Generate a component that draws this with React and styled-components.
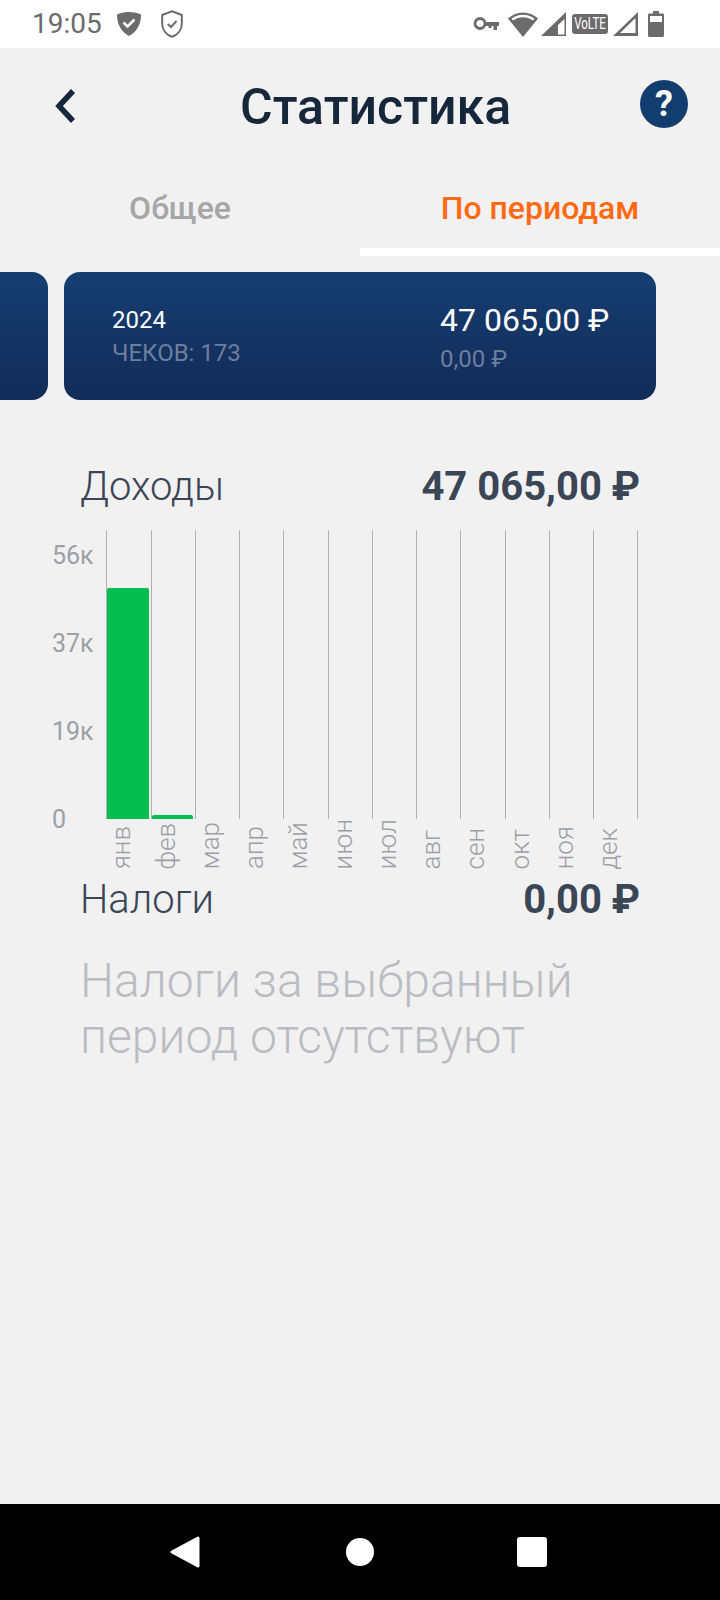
import React from "react";
import styled, { createGlobalStyle } from "styled-components";

const months = [
  { name: "янв", bar: 231 },
  { name: "фев", bar: 4 },
  { name: "мар", bar: 0 },
  { name: "апр", bar: 0 },
  { name: "май", bar: 0 },
  { name: "июн", bar: 0 },
  { name: "июл", bar: 0 },
  { name: "авг", bar: 0 },
  { name: "сен", bar: 0 },
  { name: "окт", bar: 0 },
  { name: "ноя", bar: 0 },
  { name: "дек", bar: 0 },
];

const ticks = ["56к", "37к", "19к", "0"];

const App = () => {
  return (
    <Page>
      <GlobalStyle />
      <StatusBar>
        <Time>19:05</Time>
        <svg width="26" height="24" viewBox="0 0 26 24">
          <path d="M13 0C8 0 4 1 1 2.500C1 11 4 19 13 24C22 19 25 11 25 2.500C22 1 18 0 13 0Z" fill="#6b6b6b" />
          <path d="M7.500 10.500L11.500 14.500L18.500 7.500" fill="none" stroke="#fff" strokeWidth="2.500" />
        </svg>
        <ShieldOutline width="22" height="28" viewBox="0 0 22 28">
          <path d="M11 1.200L20.800 5V14C20.800 20 16.500 24.800 11 26.800C5.500 24.800 1.200 20 1.200 14V5Z" fill="none" stroke="#6b6b6b" strokeWidth="2" />
          <path d="M6.800 14L10 17L15.500 11" fill="none" stroke="#6b6b6b" strokeWidth="2" />
        </ShieldOutline>
        <StatusRight>
          <svg width="26" height="16" viewBox="0 0 26 16">
            <circle cx="7" cy="7.500" r="5" fill="none" stroke="#6b6b6b" strokeWidth="2.800" />
            <path d="M12 6H26V10H24V14H20.500V10H18.500V12H15.500V10H12Z" fill="#6b6b6b" />
          </svg>
          <WifiIcon width="30" height="25" viewBox="0 0 30 25">
            <path d="M0 6.500C8.500 -1.500 21.500 -1.500 30 6.500L15 25Z" fill="#6b6b6b" />
            <path d="M3.500 6.700C10 1.500 20 1.500 26.500 6.700L25 8.500C19 4 11 4 5 8.500Z" fill="#fff" />
          </WifiIcon>
          <SignalIcon width="25" height="24" viewBox="0 0 25 24">
            <path d="M25 0V24H0Z" fill="#6b6b6b" />
            <path d="M23.500 7L17 13V22.500H23.500Z" fill="#fff" />
          </SignalIcon>
          <VolteBadge>
            <VolteText>VoLTE</VolteText>
          </VolteBadge>
          <SignalIcon width="25" height="24" viewBox="0 0 25 24">
            <path d="M25 0V24H0Z" fill="#6b6b6b" />
            <path d="M22.500 6L7 21H22.500Z" fill="#fff" />
          </SignalIcon>
          <BatteryIcon width="16" height="26" viewBox="0 0 16 26">
            <path d="M5 0H11V2.500H14.500C15.300 2.500 16 3.200 16 4V24.500C16 25.300 15.300 26 14.500 26H1.500C0.700 26 0 25.300 0 24.500V4C0 3.200 0.700 2.500 1.500 2.500H5Z" fill="#6b6b6b" />
            <rect x="2" y="5" width="12" height="6" fill="#fff" />
          </BatteryIcon>
        </StatusRight>
      </StatusBar>

      <Header>
        <BackButton width="22" height="36" viewBox="0 0 22 36">
          <path d="M19 3L5 18L19 33" fill="none" stroke="#17273b" strokeWidth="5.500" />
        </BackButton>
        <Title>Статистика</Title>
        <HelpButton>?</HelpButton>
      </Header>

      <Tabs>
        <Tab>Общее</Tab>
        <Tab $active>По периодам</Tab>
      </Tabs>

      <Carousel>
        <PeriodCard />
        <PeriodCard>
          <div>
            <Year>2024</Year>
            <Receipts>ЧЕКОВ: 173</Receipts>
          </div>
          <CardAmounts>
            <Income>47 065,00 ₽</Income>
            <Tax>0,00 ₽</Tax>
          </CardAmounts>
        </PeriodCard>
      </Carousel>

      <SummaryRow $top={62}>
        <SummaryLabel>Доходы</SummaryLabel>
        <SummaryValue>47 065,00 ₽</SummaryValue>
      </SummaryRow>

      <Chart>
        <YAxis>
          {ticks.map((tick) => (
            <Tick key={tick}>{tick}</Tick>
          ))}
        </YAxis>
        <div>
          <Plot>
            {months.map((month) => (
              <Column key={month.name}>
                {month.bar > 0 && <Bar $height={month.bar} />}
              </Column>
            ))}
          </Plot>
          <MonthRow>
            {months.map((month) => (
              <Month key={month.name}>{month.name}</Month>
            ))}
          </MonthRow>
        </div>
      </Chart>

      <SummaryRow $top={0}>
        <SummaryLabel>Налоги</SummaryLabel>
        <SummaryValue>0,00 ₽</SummaryValue>
      </SummaryRow>
      <EmptyText>Налоги за выбранный период отсутствуют</EmptyText>

      <NavBar>
        <svg width="30" height="32" viewBox="0 0 30 32">
          <path d="M28 2L2 16L28 30Z" fill="#fff" stroke="#fff" strokeWidth="3" strokeLinejoin="round" />
        </svg>
        <HomeDot />
        <RecentSquare />
      </NavBar>
    </Page>
  );
};

export default App;

const GlobalStyle = createGlobalStyle`
  html, body {
    margin: 0;
    padding: 0;
    background: #f1f1f1;
  }
  body {
    font-family: Roboto, "Noto Sans", sans-serif;
  }
`;

const Page = styled.main`
  position: relative;
  width: 720px;
  height: 1600px;
  overflow: hidden;
  background: #f1f1f1;
`;

const StatusBar = styled.div`
  display: flex;
  align-items: center;
  height: 48px;
  padding: 0 56px 0 32px;
  background: #fff;
`;

const Time = styled.span`
  margin-right: 14px;
  color: #6b6b6b;
  font-size: 28px;
  line-height: 1;
`;

const ShieldOutline = styled.svg`
  margin-left: 19px;
`;

const StatusRight = styled.div`
  display: flex;
  align-items: center;
  margin-left: auto;
`;

const WifiIcon = styled.svg`
  margin-left: 9px;
`;

const SignalIcon = styled.svg`
  margin-left: 3px;
`;

const VolteBadge = styled.div`
  display: flex;
  align-items: center;
  justify-content: center;
  width: 36px;
  height: 20px;
  margin: 0 2px 0 6px;
  border-radius: 3px;
  background: #6b6b6b;
`;

const VolteText = styled.span`
  color: #fff;
  font-size: 16px;
  line-height: 1;
  transform: scaleX(0.72);
`;

const BatteryIcon = styled.svg`
  margin-left: 10px;
`;

const Header = styled.header`
  display: flex;
  align-items: center;
  height: 112px;
  padding: 0 32px 0 54px;
`;

const BackButton = styled.svg`
  flex-shrink: 0;
  margin-top: 3px;
`;

const Title = styled.h1`
  margin: 6px 0 0 164px;
  color: #17273b;
  font-size: 50px;
  font-weight: 500;
  line-height: 1;
`;

const HelpButton = styled.div`
  display: flex;
  align-items: center;
  justify-content: center;
  width: 48px;
  height: 48px;
  margin-left: auto;
  border-radius: 50%;
  background: #143d6f;
  color: #fff;
  font-size: 36px;
  font-weight: 700;
`;

const Tabs = styled.nav`
  display: flex;
  height: 96px;
`;

const Tab = styled.div`
  display: flex;
  flex: 1;
  align-items: center;
  justify-content: center;
  padding-top: 8px;
  box-sizing: border-box;
  border-bottom: 8px solid ${(props) => (props.$active ? "#fff" : "transparent")};
  color: ${(props) => (props.$active ? "#ff6a13" : "#a6a6a6")};
  font-size: 32px;
  font-weight: 500;
`;

const Carousel = styled.div`
  display: flex;
  gap: 16px;
  margin: 16px 0 0 -544px;
`;

const PeriodCard = styled.div`
  display: flex;
  flex: 0 0 592px;
  align-items: center;
  justify-content: space-between;
  box-sizing: border-box;
  height: 128px;
  padding: 0 48px;
  border-radius: 16px;
  background: linear-gradient(#163e71, #122b58);
`;

const Year = styled.div`
  color: #fff;
  font-size: 24px;
  line-height: 34px;
`;

const Receipts = styled.div`
  color: #6d7f9c;
  font-size: 24px;
  line-height: 32px;
`;

const CardAmounts = styled.div`
  width: 168px;
  padding-top: 8px;
  white-space: nowrap;
`;

const Income = styled.div`
  color: #fff;
  font-size: 32px;
  line-height: 38px;
`;

const Tax = styled.div`
  color: #6d7f9c;
  font-size: 24px;
  line-height: 40px;
`;

const SummaryRow = styled.div`
  display: flex;
  align-items: center;
  justify-content: space-between;
  height: 48px;
  margin-top: ${(props) => props.$top}px;
  padding: 0 80px;
`;

const SummaryLabel = styled.span`
  color: #3a4656;
  font-size: 40px;
  font-weight: 300;
`;

const SummaryValue = styled.span`
  color: #3a4656;
  font-size: 40px;
  font-weight: 700;
`;

const Chart = styled.section`
  display: flex;
  margin-top: 20px;
`;

const YAxis = styled.div`
  display: flex;
  flex: 0 0 106.4px;
  flex-direction: column;
  gap: 88px;
  box-sizing: border-box;
  padding: 26px 0 0 52px;
`;

const Tick = styled.div`
  height: 0;
  color: #9aa0a8;
  font-size: 25px;
  line-height: 0;
`;

const Plot = styled.div`
  display: grid;
  grid-template-columns: repeat(12, 44.25px);
  width: 532px;
  height: 289px;
  border-right: 1px solid #aeb1b5;
  box-sizing: border-box;
`;

const Column = styled.div`
  display: flex;
  align-items: flex-end;
  box-sizing: border-box;
  padding-right: 2px;
  border-left: 1px solid #aeb1b5;
`;

const Bar = styled.div`
  width: 100%;
  height: ${(props) => props.$height}px;
  border-radius: 2px 2px 0 0;
  background: #04bd4f;
`;

const MonthRow = styled.div`
  display: grid;
  grid-template-columns: repeat(12, 44.25px);
  height: 56px;
  padding-bottom: 6px;
  box-sizing: border-box;
`;

const Month = styled.div`
  justify-self: start;
  align-self: end;
  margin-left: 2px;
  color: #9aa0a8;
  font-size: 26px;
  font-weight: 300;
  line-height: 1;
  writing-mode: vertical-rl;
  transform: rotate(180deg);
`;

const EmptyText = styled.p`
  width: 520px;
  margin: 30px 0 0 80px;
  color: #b9bdc3;
  font-size: 48px;
  font-weight: 300;
  line-height: 56px;
`;

const NavBar = styled.div`
  position: absolute;
  right: 0;
  bottom: 0;
  left: 0;
  display: flex;
  align-items: center;
  gap: 0;
  height: 96px;
  padding-left: 170px;
  background: #000;
`;

const HomeDot = styled.div`
  width: 28px;
  height: 28px;
  margin-left: 146px;
  border-radius: 50%;
  background: #fff;
`;

const RecentSquare = styled.div`
  width: 30px;
  height: 30px;
  margin-left: 143px;
  border-radius: 3px;
  background: #fff;
`;
